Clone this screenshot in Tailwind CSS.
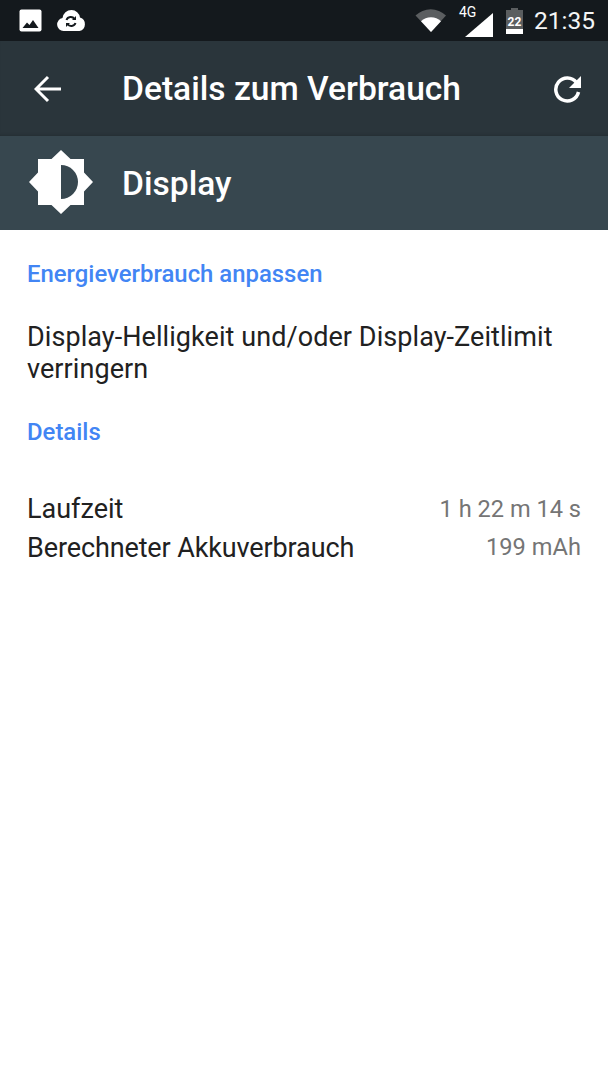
<!DOCTYPE html>
<html><head><meta charset="utf-8"><script src="https://cdn.jsdelivr.net/npm/@tailwindcss/browser@4"></script></head>
<body class="bg-white font-['Roboto',sans-serif]">
<div class="w-[608px] h-[1080px] flex flex-col overflow-hidden">
  <div class="h-[41px] bg-[#14191d] flex items-center text-white shrink-0">
    <svg class="ml-[19px]" width="23" height="23" viewBox="0 0 23 23"><rect x="0.5" y="0.5" width="22" height="22" rx="2" fill="#fff"/><path d="M3.500 19l4.500-5.500 2.500 2.500 3.500-5 5.500 8z" fill="#14191d"/></svg>
    <svg class="ml-[14px]" width="30" height="23" viewBox="0 0 30 23"><path d="M7 22a6.500 6.500 0 0 1-1-12.900A9 9 0 0 1 15 1a8.500 8.500 0 0 1 8.500 7.500A7 7 0 0 1 23 22z" fill="#fff" transform="translate(0.500,0)"/><path d="M10.500 11a4.500 4.500 0 0 1 8-1M19.500 14a4.500 4.500 0 0 1-8 1" stroke="#14191d" stroke-width="2" fill="none"/><path d="M20 7v4h-4zM10 18v-4h4z" fill="#14191d"/></svg>
    <svg class="ml-auto" width="32" height="24" viewBox="0 0 32 24"><path d="M16 23L0.500 6.500A22 22 0 0 1 31 6.500z" fill="#5b5e60"/><path d="M16 23L6 12.300A14.500 14.500 0 0 1 26 12.300z" fill="#fff"/></svg>
    <div class="relative ml-[18px] w-[28px] h-[32px]">
      <span class="absolute left-[-6px] top-[-1px] text-[14px] leading-[16px]">4G</span>
      <svg class="absolute left-0 top-0" width="28" height="32" viewBox="0 0 28 32"><path d="M0 32L28 8v24z" fill="#fff"/></svg>
    </div>
    <svg class="ml-[13px]" width="17" height="26" viewBox="0 0 17 26"><path d="M5 0h7v2h5v24H0V2h5z" fill="#5b5e60"/><rect y="21" width="17" height="5" fill="#fff"/><text x="8.500" y="18" text-anchor="middle" font-size="12" font-weight="700" font-family="Roboto" fill="#fff">22</text></svg>
    <span class="ml-[11px] mr-[13px] text-[24.500px] leading-[28px] text-[#f4f5f5]">21:35</span>
  </div>
  <div class="h-[95px] bg-[#2a353b] flex items-center text-white shrink-0 shadow-[inset_0_-3px_3px_-2px_rgba(0,0,0,0.15)]">
    <svg class="ml-[34px]" width="28" height="28" viewBox="0 0 28 28"><path d="M27 14H2M14 2L2 14l12 12" fill="none" stroke="#fff" stroke-width="3"/></svg>
    <span class="ml-[60px] text-[33.600px] leading-[40px] font-medium">Details zum Verbrauch</span>
    <svg class="ml-auto mr-[26px]" width="29" height="29" viewBox="0 0 29 29"><path d="M23.500 8.500A11.500 11.500 0 1 0 25.500 18" fill="none" stroke="#fff" stroke-width="3.500"/><path d="M28 2v12H16z" fill="#fff"/></svg>
  </div>
  <div class="h-[94px] bg-[#37474f] flex items-center text-white shrink-0">
    <svg class="ml-[29px] mb-[2px]" width="64" height="64" viewBox="0 0 64 64"><path d="M32 0l9.500 9H55v13.500l9 9.500-9 9.500V55H41.500L32 64l-9.500-9H9V41.500L0 32l9-9.500V9h13.500z" fill="#fff"/><path d="M32 15a17 17 0 0 1 0 34z" fill="#37474f"/></svg>
    <span class="ml-[29px] mt-[2px] text-[33.600px] leading-[40px] font-medium">Display</span>
  </div>
  <div class="flex-1 bg-white relative">
    <div class="pl-[27px] pr-[27px]">
      <div class="pt-[31px] text-[23.900px] leading-[26px] font-medium text-[#4285f4]">Energieverbrauch anpassen</div>
      <div class="mt-[34px] w-[540px] text-[27px] leading-[32px] tracking-[0.07px] text-[#212121]">Display-Helligkeit und/oder Display-Zeitlimit verringern</div>
      <div class="mt-[34px] text-[23.900px] leading-[26px] font-medium text-[#4285f4]">Details</div>
      <div class="mt-[45px] flex justify-between items-center h-[39px]"><span class="text-[27px] text-[#212121]">Laufzeit</span><span class="text-[23.600px] text-[#757575]">1 h 22 m 14 s</span></div>
      <div class="flex justify-between items-center h-[38px]"><span class="text-[27px] tracking-[-0.12px] text-[#212121]">Berechneter Akkuverbrauch</span><span class="text-[23.600px] text-[#757575] tracking-[0.05px]">199 mAh</span></div>
    </div>
  </div>
</div>
</body></html>
